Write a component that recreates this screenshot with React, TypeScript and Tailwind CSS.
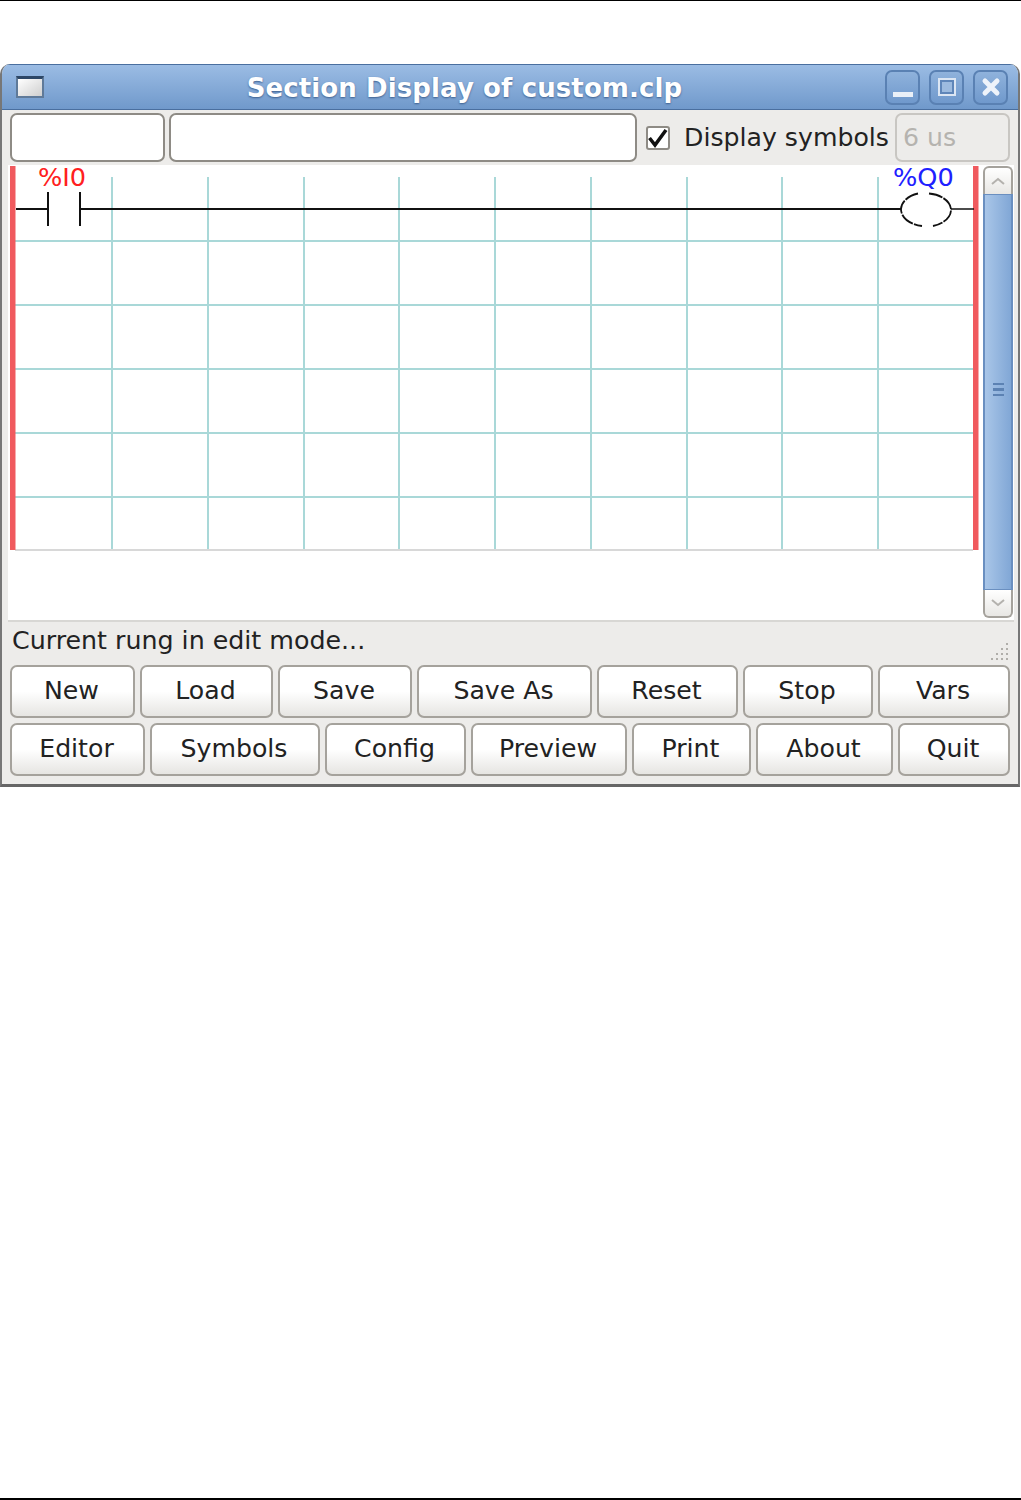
import React from 'react'

const font = 'font-["DejaVu_Sans",sans-serif]'

const rowOne = [
  { label: 'New', width: 'w-[125px]' },
  { label: 'Load', width: 'w-[133px]' },
  { label: 'Save', width: 'w-[134px]' },
  { label: 'Save As', width: 'w-[175px]' },
  { label: 'Reset', width: 'w-[141px]' },
  { label: 'Stop', width: 'w-[130px]' },
  { label: 'Vars', width: 'w-[132px]' },
]

const rowTwo = [
  { label: 'Editor', width: 'w-[135px]' },
  { label: 'Symbols', width: 'w-[170px]' },
  { label: 'Config', width: 'w-[141px]' },
  { label: 'Preview', width: 'w-[156px]' },
  { label: 'Print', width: 'w-[119px]' },
  { label: 'About', width: 'w-[137px]' },
  { label: 'Quit', width: 'w-[112px]' },
]

const gridX = [112, 208, 304, 399, 495, 591, 687, 782, 878]
const gridY = [241, 305, 369, 433, 497]

const TitleButton = ({ children }: { children: React.ReactNode }) => (
  <div className="flex h-[35px] w-[35px] items-center justify-center rounded-[7px] border-2 border-[#5a81b3] bg-gradient-to-b from-[#8fb2dc] to-[#7099cc]">
    {children}
  </div>
)

const Ladder = () => (
  <svg width="975" height="455" viewBox="8 165 975 455" className="block overflow-visible">
    {gridX.map((x) => (
      <line key={x} x1={x} y1={177} x2={x} y2={550} stroke="#a9d8d8" strokeWidth="2" />
    ))}
    {gridY.map((y) => (
      <line key={y} x1={15} y1={y} x2={973} y2={y} stroke="#a9d8d8" strokeWidth="2" />
    ))}
    <line x1={15} y1={550} x2={973} y2={550} stroke="#d8d8d8" strokeWidth="2" />
    <rect x={10} y={166} width={5.5} height={384} fill="#f05a5e" />
    <rect x={973} y={166} width={5.5} height={384} fill="#f05a5e" />
    <g stroke="#111111" fill="none">
      <g strokeWidth="2">
        <line x1={16} y1={209} x2={48} y2={209} />
        <line x1={48} y1={192} x2={48} y2={226} />
        <line x1={80} y1={192} x2={80} y2={226} />
        <line x1={80} y1={209} x2={901} y2={209} />
      </g>
      <line x1={951} y1={209} x2={974} y2={209} strokeWidth="1.5" />
      <g strokeWidth="1.8" strokeDasharray="14 1.2">
        <path d="M918 193.5 A25 17 0 0 0 901 209 A25 17 0 0 0 922 226" />
        <path d="M929 193.5 A25 17 0 0 1 951 209 A25 17 0 0 1 933 226" />
      </g>
    </g>
    <text x={38} y={186} fontSize="25.6" fill="#ff2020" fontFamily="DejaVu Sans">%I0</text>
    <text x={893} y={186} fontSize="25.6" fill="#2020ff" fontFamily="DejaVu Sans">%Q0</text>
  </svg>
)

const Scrollbar = () => (
  <div className="flex h-[455px] w-[31px] flex-col pt-px">
    <div className="flex h-[28px] w-[30px] items-center justify-center rounded-t-[6px] border-2 border-b-0 border-[#a5a29c] bg-gradient-to-b from-white to-[#e8e7e4]">
      <svg width="14" height="8" viewBox="0 0 14 8" fill="none" stroke="#b4b2ae" strokeWidth="2">
        <path d="M1 7 L7 2 L13 7" />
      </svg>
    </div>
    <div className="flex h-[396px] w-[30px] items-center justify-center border-x-2 border-y border-[#6a8fc0] bg-gradient-to-r from-[#a9c6e8] to-[#81a7d6] pb-[6px]">
      <div className="flex flex-col gap-[3px]">
        <div className="h-[2px] w-[11px] bg-[#5c82b3]" />
        <div className="h-[3px] w-[11px] bg-[#5c82b3]" />
        <div className="h-[2px] w-[11px] bg-[#5c82b3]" />
      </div>
    </div>
    <div className="flex h-[28px] w-[30px] items-center justify-center rounded-b-[6px] border-2 border-t-0 border-[#a5a29c] bg-gradient-to-b from-white to-[#e8e7e4]">
      <svg width="14" height="8" viewBox="0 0 14 8" fill="none" stroke="#b4b2ae" strokeWidth="2">
        <path d="M1 1 L7 6 L13 1" />
      </svg>
    </div>
  </div>
)

const GtkButton = ({ label, width }: { label: string; width: string }) => (
  <div
    className={`flex h-[53px] items-center justify-center rounded-[7px] border-2 border-[#a5a29c] bg-gradient-to-b from-white from-50% to-[#e6e5e2] pr-[2px] pb-[2px] text-[25.2px] text-[#222222] ${width}`}
  >
    {label}
  </div>
)

export default function App() {
  return (
    <div className={`flex h-[1500px] w-full flex-col bg-white ${font}`}>
      <div className="h-px w-full bg-black" />
      <div className="mt-[63px] w-[1020px] overflow-hidden rounded-t-[10px] border-x-2 border-b-[3px] border-x-[#777777] border-b-[#666666] bg-[#edecea]">
        <div className="flex h-[46px] items-center border-b border-t border-[#4a6f9f] bg-gradient-to-b from-[#9bbce4] to-[#7099cb] pr-[10px] pl-[14px]">
          <div className="h-[22px] w-[28px] border-2 border-[#5f7a99] border-t-[3px] border-t-[#2d4767] bg-gradient-to-br from-white to-[#cfcfcf]" />
          <div className="flex-1 pt-[2px] text-center text-[26px] leading-none font-bold tracking-[0.1px] text-white [text-shadow:0_1px_2px_#3d5f8e]">
            Section Display of custom.clp
          </div>
          <div className="flex gap-[9px]">
            <TitleButton>
              <div className="mt-[14px] h-[5px] w-[20px] bg-[#eaf0f8]" />
            </TitleButton>
            <TitleButton>
              <div className="h-[18px] w-[18px] border-2 border-[#dce6f3] bg-[#5f86b9] p-[2px]">
                <div className="h-full w-full bg-[#9dbbdf]" />
              </div>
            </TitleButton>
            <TitleButton>
              <svg width="20" height="20" viewBox="0 0 20 20" stroke="#eef3fa" strokeWidth="5" strokeLinecap="round">
                <path d="M4 4 L16 16 M16 4 L4 16" />
              </svg>
            </TitleButton>
          </div>
        </div>

        <div className="flex h-[55px] items-center pl-[8px]">
          <div className="h-[49px] w-[155px] rounded-[7px] border-2 border-[#8e8b85] bg-white" />
          <div className="ml-[4px] h-[49px] w-[468px] rounded-[7px] border-2 border-[#8e8b85] bg-white" />
          <div className="ml-[9px] flex h-[24px] w-[24px] items-center justify-center rounded-[3px] border-2 border-[#8e8b85] bg-white">
            <svg width="20" height="20" viewBox="0 0 20 20" fill="none" stroke="#111111" strokeWidth="3.5">
              <path d="M1.5 10 L7 17 L18 2" />
            </svg>
          </div>
          <div className="ml-[14px] w-[211px] text-[25.2px] leading-none whitespace-nowrap text-[#222222]">Display symbols</div>
          <div className="flex h-[49px] w-[115px] items-center rounded-[7px] border-2 border-[#c8c6c2] bg-[#edecea] pl-[6px] text-[25.2px] text-[#b5b3af]">
            6 us
          </div>
        </div>

        <div className="ml-[6px] flex w-[1006px] border-b-2 border-[#d8d7d4] bg-white">
          <Ladder />
          <Scrollbar />
        </div>

        <div className="flex h-[43px] items-center justify-between pr-[8px] pl-[10px]">
          <span className="pb-[5px] text-[25.3px] leading-none text-[#222222]">Current rung in edit mode...</span>
          <svg width="22" height="22" viewBox="0 0 22 22" fill="#b0aeaa" className="mt-[16px]">
            <rect x="18" y="2" width="2" height="2" />
            <rect x="13" y="7" width="2" height="2" />
            <rect x="18" y="7" width="2" height="2" />
            <rect x="8" y="12" width="2" height="2" />
            <rect x="13" y="12" width="2" height="2" />
            <rect x="18" y="12" width="2" height="2" />
            <rect x="3" y="17" width="2" height="2" />
            <rect x="8" y="17" width="2" height="2" />
            <rect x="13" y="17" width="2" height="2" />
            <rect x="18" y="17" width="2" height="2" />
          </svg>
        </div>

        <div className="flex flex-col gap-[5px] pb-[8px] pl-[8px]">
          <div className="flex gap-[5px]">
            {rowOne.map((b) => (
              <GtkButton key={b.label} label={b.label} width={b.width} />
            ))}
          </div>
          <div className="flex gap-[5px]">
            {rowTwo.map((b) => (
              <GtkButton key={b.label} label={b.label} width={b.width} />
            ))}
          </div>
        </div>
      </div>
      <div className="mt-auto h-[2px] w-full bg-black" />
    </div>
  )
}
